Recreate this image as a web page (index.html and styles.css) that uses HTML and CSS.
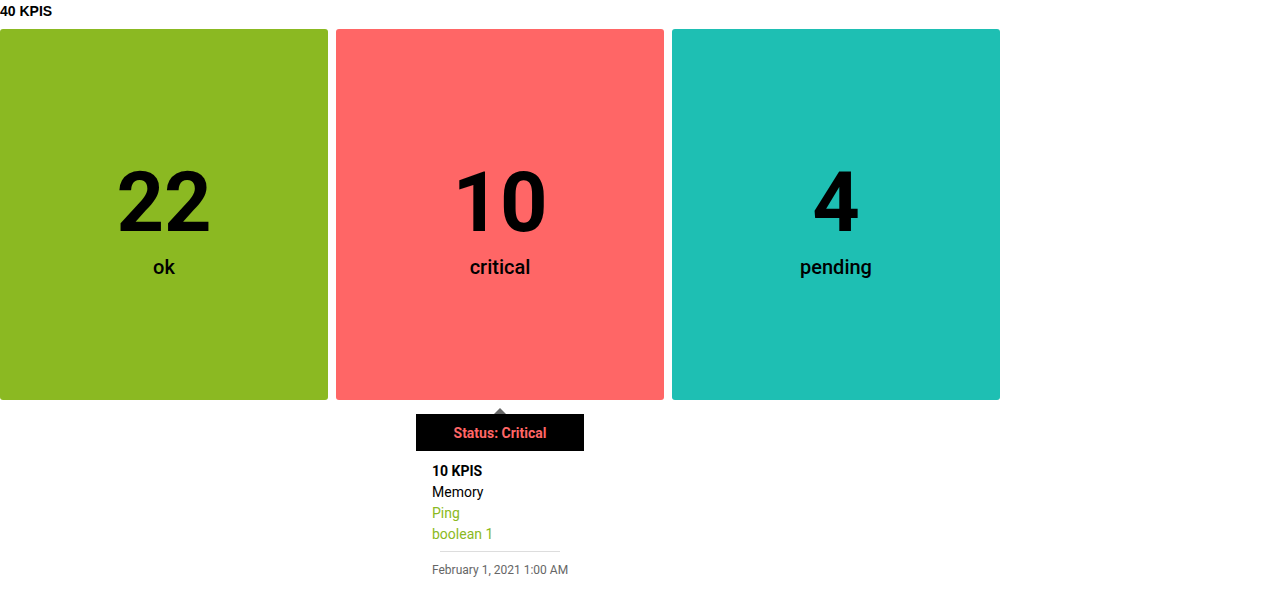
FILE: index.html
```html
<!DOCTYPE html>
<html>
<head>
<meta charset="utf-8">
<link rel="stylesheet" href="styles.css">
</head>
<body>
<div class="title">40 KPIS</div>
<div class="cards">
  <div class="card ok"><div class="num">22</div><div class="label">ok</div></div>
  <div class="card critical"><div class="num">10</div><div class="label">critical</div></div>
  <div class="card pending"><div class="num">4</div><div class="label">pending</div></div>
</div>
<div class="tooltip">
  <div class="arrow"></div>
  <div class="tip-head">Status: Critical</div>
  <div class="tip-body">
    <div class="tip-count">10 KPIS</div>
    <div class="tip-item">Memory</div>
    <div class="tip-item ok-text">Ping</div>
    <div class="tip-item ok-text">boolean 1</div>
    <div class="tip-sep"></div>
    <div class="tip-date">February 1, 2021 1:00 AM</div>
  </div>
</div>
</body>
</html>
```

FILE: styles.css
```css
html, body {
  margin: 0;
  padding: 0;
  background: #fff;
  font-family: Roboto, "Liberation Sans", sans-serif;
  color: #000;
}
.title {
  font-family: "Liberation Sans", Arial, sans-serif;
  font-weight: bold;
  font-size: 14px;
  line-height: 23px;
  height: 29px;
  box-sizing: border-box;
}
.cards {
  display: flex;
  gap: 8px;
}
.card {
  width: 328px;
  height: 371px;
  border-radius: 3px;
  display: flex;
  flex-direction: column;
  align-items: center;
  justify-content: center;
  padding-top: 12px;
  box-sizing: border-box;
}
.ok { background: #8bb922; }
.critical { background: #ff6666; }
.pending { background: #1ebfb3; }
.num {
  font-size: 83px;
  font-weight: 700;
  line-height: 80px;
}
.label {
  font-size: 20px;
  font-weight: 500;
  line-height: 24px;
  margin-top: 12px;
}
.tooltip {
  position: absolute;
  left: 416px;
  top: 408px;
  width: 168px;
}
.arrow {
  width: 0;
  height: 0;
  margin: 0 auto 0 78px;
  border-left: 6px solid transparent;
  border-right: 6px solid transparent;
  border-bottom: 6px solid #666;
}
.tip-head {
  background: #000;
  color: #ff6666;
  font-size: 14px;
  font-weight: 700;
  text-align: center;
  height: 37px;
  line-height: 38px;
}
.tip-body {
  background: #fff;
  padding: 10px 16px 8px;
  font-size: 14px;
  line-height: 21px;
  white-space: nowrap;
}
.tip-count { font-weight: 700; }
.ok-text { color: #8bb922; }
.tip-sep {
  height: 1px;
  background: #ddd;
  margin: 6px 8px 8px;
}
.tip-date {
  font-size: 12px;
  color: #666;
  line-height: 20px;
}
```
